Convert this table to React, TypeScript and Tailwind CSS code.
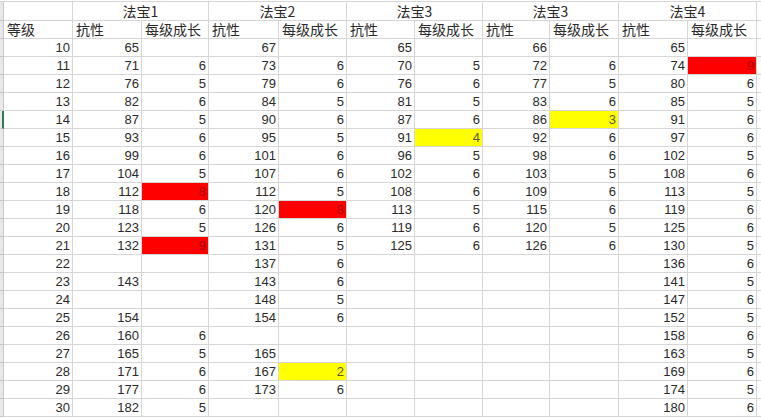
import React from 'react';

type Hl = 'red' | 'yellow';

// level, then (抗性, 每级成长) pairs for each 法宝
const data: (number | null)[][] = [
  [10, 65, null, 67, null, 65, null, 66, null, 65, null],
  [11, 71, 6, 73, 6, 70, 5, 72, 6, 74, 9],
  [12, 76, 5, 79, 6, 76, 6, 77, 5, 80, 6],
  [13, 82, 6, 84, 5, 81, 5, 83, 6, 85, 5],
  [14, 87, 5, 90, 6, 87, 6, 86, 3, 91, 6],
  [15, 93, 6, 95, 5, 91, 4, 92, 6, 97, 6],
  [16, 99, 6, 101, 6, 96, 5, 98, 6, 102, 5],
  [17, 104, 5, 107, 6, 102, 6, 103, 5, 108, 6],
  [18, 112, 8, 112, 5, 108, 6, 109, 6, 113, 5],
  [19, 118, 6, 120, 8, 113, 5, 115, 6, 119, 6],
  [20, 123, 5, 126, 6, 119, 6, 120, 5, 125, 6],
  [21, 132, 9, 131, 5, 125, 6, 126, 6, 130, 5],
  [22, null, null, 137, 6, null, null, null, null, 136, 6],
  [23, 143, null, 143, 6, null, null, null, null, 141, 5],
  [24, null, null, 148, 5, null, null, null, null, 147, 6],
  [25, 154, null, 154, 6, null, null, null, null, 152, 5],
  [26, 160, 6, null, null, null, null, null, null, 158, 6],
  [27, 165, 5, 165, null, null, null, null, null, 163, 5],
  [28, 171, 6, 167, 2, null, null, null, null, 169, 6],
  [29, 177, 6, 173, 6, null, null, null, null, 174, 5],
  [30, 182, 5, null, null, null, null, null, null, 180, 6],
];

const highlights: Record<string, Hl> = {
  '11-10': 'red',
  '14-8': 'yellow',
  '15-6': 'yellow',
  '18-2': 'red',
  '19-4': 'red',
  '21-2': 'red',
  '28-4': 'yellow',
};

const groups = ['法宝1', '法宝2', '法宝3', '法宝3', '法宝4'];

const cell = 'border-r border-b border-[#d6d6d6] h-[18px]';

const NumCell: React.FC<{ v: number | null; hl?: Hl }> = ({ v, hl }) => {
  let cls = `${cell} flex items-center justify-end pr-[2px] text-[13px] text-[#2a2a2a]`;
  if (hl === 'red') cls = `${cell} flex items-center justify-end pr-[2px] text-[13px] bg-[#ff0000] text-[#a30000]`;
  if (hl === 'yellow') cls = `${cell} flex items-center justify-end pr-[2px] text-[13px] bg-[#ffff00] text-[#5a5a3a]`;
  return <div className={cls}>{v ?? ''}</div>;
};

const Strip: React.FC<{ active?: boolean; tall?: boolean }> = ({ active, tall }) => (
  <div
    className={
      active
        ? 'h-[18px] bg-[#e8e8e8] border-b border-[#c8c8c8] border-r-2 border-r-[#2f7a50]'
        : tall
        ? 'h-[19px] bg-[#e8e8e8] border-b border-r border-[#c8c8c8]'
        : 'h-[18px] bg-[#e8e8e8] border-b border-r border-[#c8c8c8]'
    }
  />
);

export default function App() {
  return (
    <div className="w-[761px] h-[418px] bg-white overflow-hidden font-[family-name:'Liberation_Sans','Noto_Sans_CJK_SC',sans-serif]">
      <div className="mt-[1px] border-t border-[#d6d6d6] grid grid-cols-[4px_69px_69px_67px_70px_68px_68px_68px_67px_69px_69px_69px_1fr]">
        {/* row 1: merged 法宝 headers */}
        <Strip tall />
        <div className="border-r border-b border-[#d6d6d6] h-[19px]" />
        {groups.map((g, i) => (
          <div
            key={i}
            className="col-span-2 border-r border-b border-[#d6d6d6] h-[19px] flex items-center justify-center text-[14px] text-[#2a2a2a] font-['Noto_Sans_CJK_SC',sans-serif]"
          >
            {g}
          </div>
        ))}
        <div className="border-b border-[#d6d6d6] h-[19px]" />

        {/* row 2: column titles */}
        <Strip />
        <div className={`${cell} flex items-center pl-[3px] text-[14px] text-[#2a2a2a] font-['Noto_Sans_CJK_SC',sans-serif]`}>等级</div>
        {groups.map((_, i) => (
          <React.Fragment key={i}>
            <div className={`${cell} flex items-center pl-[3px] text-[14px] text-[#2a2a2a] font-['Noto_Sans_CJK_SC',sans-serif]`}>抗性</div>
            <div className={`${cell} flex items-center pl-[3px] text-[14px] text-[#2a2a2a] font-['Noto_Sans_CJK_SC',sans-serif]`}>每级成长</div>
          </React.Fragment>
        ))}
        <div className="border-b border-[#d6d6d6] h-[18px]" />

        {data.map((row) => (
          <React.Fragment key={row[0]}>
            <Strip active={row[0] === 14} />
            {row.map((v, ci) => (
              <NumCell key={ci} v={v} hl={highlights[`${row[0]}-${ci}`]} />
            ))}
            <div className="border-b border-[#d6d6d6] h-[18px]" />
          </React.Fragment>
        ))}
      </div>
    </div>
  );
}
